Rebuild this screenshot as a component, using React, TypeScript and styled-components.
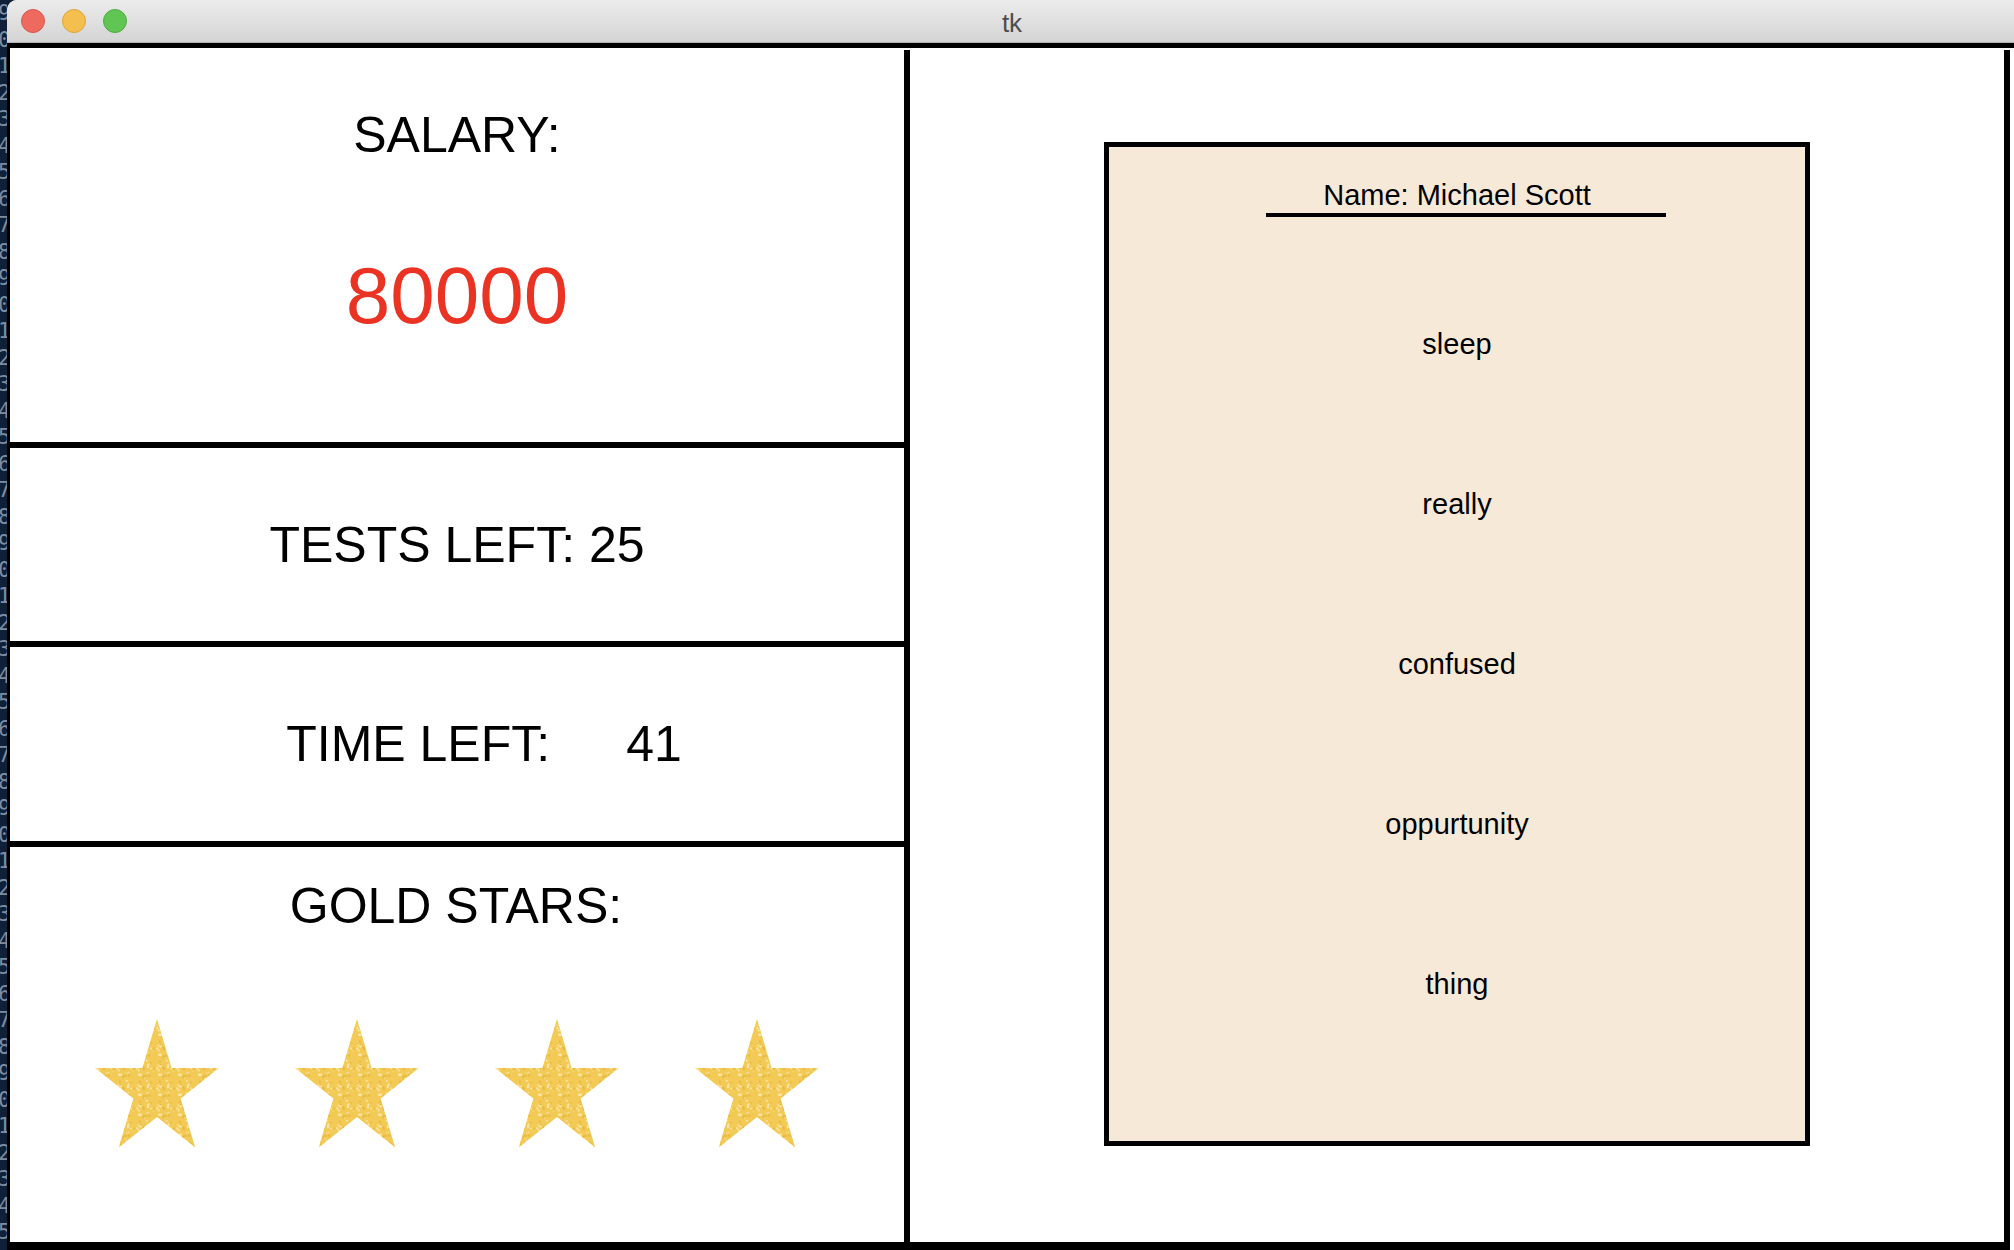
import React, { useId } from "react";
import styled, { createGlobalStyle } from "styled-components";

const GlobalStyle = createGlobalStyle`
  html, body {
    margin: 0;
    padding: 0;
    width: 2014px;
    height: 1250px;
    overflow: hidden;
    background: #0e2139;
  }
  #root { width: 2014px; height: 1250px; }
  * { box-sizing: border-box; }
`;

const Screen = styled.div`
  display: flex;
  width: 2014px;
  height: 1250px;
  overflow: hidden;
  background: #0e2139;
`;

const Gutter = styled.div`
  flex: none;
  width: 7px;
  overflow: hidden;
  display: flex;
  flex-direction: column;
  font-family: "DejaVu Sans Mono", "Liberation Mono", monospace;
  font-size: 21px;
  line-height: 26.5px;
  color: #7f8ca0;
`;

const GutterDigit = styled.span`
  margin-left: -2px;
  white-space: nowrap;
`;

const Window = styled.div`
  flex: none;
  width: 2010px;
  display: flex;
  flex-direction: column;
  background: #fff;
  border-top-left-radius: 10px;
  overflow: hidden;
`;

const TitleBar = styled.div`
  flex: none;
  height: 43px;
  display: grid;
  grid-template-columns: 1fr auto 1fr;
  align-items: center;
  background: linear-gradient(#ececec, #d4d4d4);
  border-bottom: 1px solid #b3b3b3;
`;

const Lights = styled.div`
  display: flex;
  gap: 17px;
  padding-left: 14px;
`;

const Light = styled.span<{ $fill: string; $edge: string }>`
  width: 24px;
  height: 24px;
  border-radius: 50%;
  background: ${(p) => p.$fill};
  border: 1px solid ${(p) => p.$edge};
`;

const Title = styled.div`
  font-family: "Liberation Sans", Arial, sans-serif;
  font-size: 26px;
  line-height: 1;
  color: #4d4d4d;
  padding-top: 4px;
`;

const WindowBody = styled.div`
  flex: 1;
  display: flex;
  border-top: 5px solid #000;
  border-left: 3px solid #000;
  padding-top: 2px;
  background: #fff;
`;

const Canvas = styled.div`
  flex: none;
  width: 2000px;
  height: 1200px;
  display: grid;
  grid-template-columns: 900px 1094px;
  border-right: 6px solid #000;
  border-bottom: 8px solid #000;
  background: #fff;
`;

const LeftPanel = styled.div`
  display: flex;
  flex-direction: column;
  border-right: 6px solid #000;
`;

const Section = styled.div<{ $h: number; $rule?: boolean; $center?: boolean }>`
  flex: none;
  height: ${(p) => p.$h}px;
  display: flex;
  flex-direction: column;
  align-items: center;
  justify-content: ${(p) => (p.$center ? "center" : "flex-start")};
  border-bottom: ${(p) => (p.$rule ? "6px solid #000" : "none")};
`;

const Label = styled.div<{ $top?: number; $nudge?: number }>`
  font-family: "Liberation Sans", Arial, Helvetica, sans-serif;
  font-size: 50px;
  line-height: 1;
  color: #000;
  white-space: pre;
  margin-top: ${(p) => p.$top ?? 0}px;
  padding-right: ${(p) => p.$nudge ?? 0}px;
`;

const Salary = styled.div`
  font-family: "Liberation Sans", Arial, Helvetica, sans-serif;
  font-size: 80px;
  line-height: 1;
  color: #ea3323;
  margin-top: 96px;
`;

const TimeRow = styled.div`
  display: flex;
  align-items: baseline;
  padding-left: 54px;
`;

const TimeValue = styled(Label)`
  margin-left: 76px;
`;

const StarRow = styled.div`
  display: flex;
  gap: 76px;
  margin-top: 88px;
`;

const RightPanel = styled.div`
  display: flex;
  align-items: flex-start;
  justify-content: center;
  padding-top: 92px;
`;

const Card = styled.div`
  width: 706px;
  height: 1004px;
  border: 5px solid #000;
  background: #f7e9d8;
  display: flex;
  flex-direction: column;
  align-items: center;
  padding-top: 34px;
`;

const NameLabel = styled.div`
  font-family: "Liberation Sans", Arial, Helvetica, sans-serif;
  font-size: 29px;
  line-height: 1;
  color: #000;
`;

const NameRule = styled.div`
  width: 400px;
  height: 4px;
  background: #000;
  margin-top: 3px;
  margin-left: 18px;
`;

const WordList = styled.div`
  display: flex;
  flex-direction: column;
  align-items: center;
  margin-top: 47px;
`;

const Word = styled.div`
  font-family: "Liberation Sans", Arial, Helvetica, sans-serif;
  font-size: 29px;
  line-height: 160px;
  height: 160px;
  color: #000;
`;

const STAR_POINTS = (() => {
  const pts: string[] = [];
  const cx = 62, cy = 71, rx = 65, ry = 71;
  for (let i = 0; i < 10; i++) {
    const a = ((-90 + i * 36) * Math.PI) / 180;
    const k = i % 2 === 0 ? 1 : 0.382;
    pts.push(`${(cx + k * rx * Math.cos(a)).toFixed(2)},${(cy + k * ry * Math.sin(a)).toFixed(2)}`);
  }
  return pts.join(" ");
})();

const SPECKLES = (() => {
  let s = 12345;
  const rnd = () => {
    s = (s * 1103515245 + 12345) % 2147483648;
    return s / 2147483648;
  };
  const out: { x: number; y: number; r: number; c: string }[] = [];
  for (let i = 0; i < 26; i++) {
    out.push({
      x: rnd() * 20,
      y: rnd() * 20,
      r: 0.5 + rnd() * 0.9,
      c: rnd() > 0.35 ? "#fbe9b0" : "#e6b83d",
    });
  }
  return out;
})();

function GoldStar() {
  const id = useId().replace(/:/g, "");
  return (
    <svg width="124" height="129" viewBox="0 0 124 129">
      <defs>
        <pattern id={`g${id}`} width="20" height="20" patternUnits="userSpaceOnUse">
          {SPECKLES.map((d, i) => (
            <circle key={i} cx={d.x} cy={d.y} r={d.r} fill={d.c} opacity="0.85" />
          ))}
        </pattern>
      </defs>
      <polygon points={STAR_POINTS} fill="#f2ca55" />
      <polygon points={STAR_POINTS} fill={`url(#g${id})`} />
    </svg>
  );
}

const GUTTER_DIGITS = Array.from({ length: 48 }, (_, i) => String((i + 9) % 10));
const WORDS = ["sleep", "really", "confused", "oppurtunity", "thing"];

export default function App() {
  return (
    <>
      <GlobalStyle />
      <Screen>
        <Gutter>
          {GUTTER_DIGITS.map((d, i) => (
            <GutterDigit key={i}>{d}</GutterDigit>
          ))}
        </Gutter>
        <Window>
          <TitleBar>
            <Lights>
              <Light $fill="#ee6a5f" $edge="#d8574c" />
              <Light $fill="#f5bf4f" $edge="#dca53a" />
              <Light $fill="#61c554" $edge="#4fab41" />
            </Lights>
            <Title>tk</Title>
            <span />
          </TitleBar>
          <WindowBody>
            <Canvas>
              <LeftPanel>
                <Section $h={398} $rule>
                  <Label $top={60}>SALARY:</Label>
                  <Salary>80000</Salary>
                </Section>
                <Section $h={199} $rule $center>
                  <Label>TESTS LEFT: 25</Label>
                </Section>
                <Section $h={200} $rule $center>
                  <TimeRow>
                    <Label>TIME LEFT:</Label>
                    <TimeValue>41</TimeValue>
                  </TimeRow>
                </Section>
                <Section $h={395}>
                  <Label $top={34} $nudge={2}>GOLD STARS:</Label>
                  <StarRow>
                    <GoldStar />
                    <GoldStar />
                    <GoldStar />
                    <GoldStar />
                  </StarRow>
                </Section>
              </LeftPanel>
              <RightPanel>
                <Card>
                  <NameLabel>Name: Michael Scott</NameLabel>
                  <NameRule />
                  <WordList>
                    {WORDS.map((w) => (
                      <Word key={w}>{w}</Word>
                    ))}
                  </WordList>
                </Card>
              </RightPanel>
            </Canvas>
          </WindowBody>
        </Window>
      </Screen>
    </>
  );
}
